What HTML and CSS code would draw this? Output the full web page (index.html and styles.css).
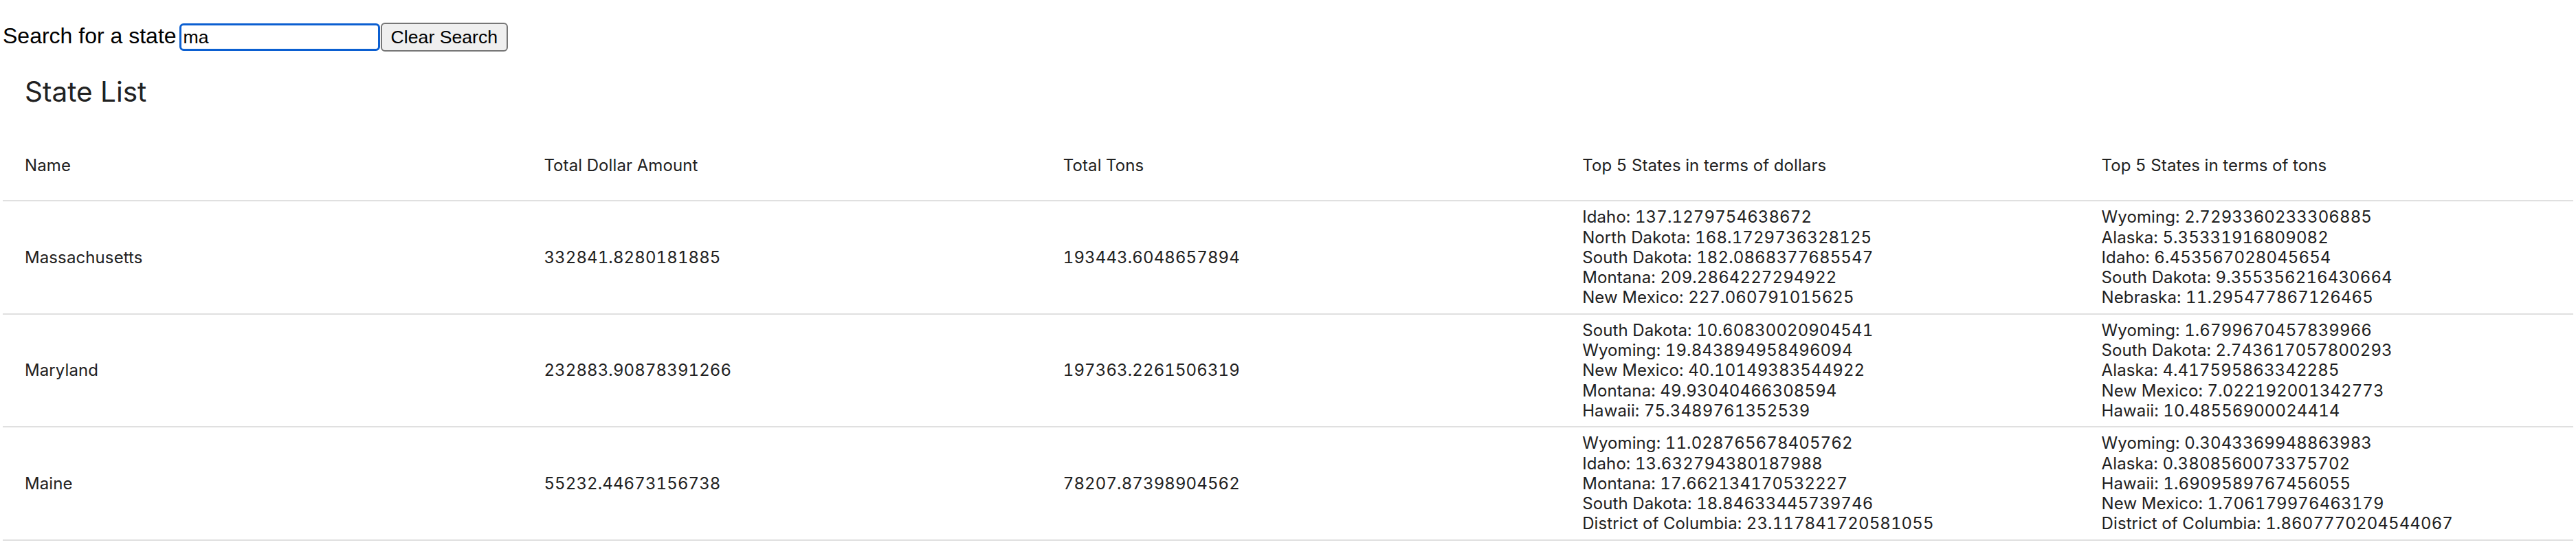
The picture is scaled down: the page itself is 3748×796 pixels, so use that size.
FILE: index.html
```html
<!DOCTYPE html>
<html lang="en">
<head>
<meta charset="utf-8">
<title>State List</title>
<link rel="stylesheet" href="styles.css">
</head>
<body>
<div class="page">
  <div class="search">
    <label class="search-label" for="q">Search for a state</label>
    <input id="q" class="search-input" type="text" value="ma">
    <button class="clear-btn" type="button">Clear Search</button>
  </div>
  <h2 class="title">State List</h2>
  <table class="states">
    <colgroup>
      <col class="col">
      <col class="col">
      <col class="col">
      <col class="col">
      <col>
    </colgroup>
    <thead>
      <tr>
        <th>Name</th>
        <th>Total Dollar Amount</th>
        <th>Total Tons</th>
        <th>Top 5 States in terms of dollars</th>
        <th>Top 5 States in terms of tons</th>
      </tr>
    </thead>
    <tbody>
      <tr>
        <td>Massachusetts</td>
        <td>332841.8280181885</td>
        <td>193443.6048657894</td>
        <td>
          <div class="line">Idaho: 137.1279754638672</div>
          <div class="line">North Dakota: 168.1729736328125</div>
          <div class="line">South Dakota: 182.0868377685547</div>
          <div class="line">Montana: 209.2864227294922</div>
          <div class="line">New Mexico: 227.060791015625</div>
        </td>
        <td>
          <div class="line">Wyoming: 2.7293360233306885</div>
          <div class="line">Alaska: 5.35331916809082</div>
          <div class="line">Idaho: 6.453567028045654</div>
          <div class="line">South Dakota: 9.355356216430664</div>
          <div class="line">Nebraska: 11.295477867126465</div>
        </td>
      </tr>
      <tr>
        <td>Maryland</td>
        <td>232883.90878391266</td>
        <td>197363.2261506319</td>
        <td>
          <div class="line">South Dakota: 10.60830020904541</div>
          <div class="line">Wyoming: 19.843894958496094</div>
          <div class="line">New Mexico: 40.10149383544922</div>
          <div class="line">Montana: 49.93040466308594</div>
          <div class="line">Hawaii: 75.3489761352539</div>
        </td>
        <td>
          <div class="line">Wyoming: 1.6799670457839966</div>
          <div class="line">South Dakota: 2.743617057800293</div>
          <div class="line">Alaska: 4.417595863342285</div>
          <div class="line">New Mexico: 7.022192001342773</div>
          <div class="line">Hawaii: 10.48556900024414</div>
        </td>
      </tr>
      <tr>
        <td>Maine</td>
        <td>55232.44673156738</td>
        <td>78207.87398904562</td>
        <td>
          <div class="line">Wyoming: 11.028765678405762</div>
          <div class="line">Idaho: 13.632794380187988</div>
          <div class="line">Montana: 17.662134170532227</div>
          <div class="line">South Dakota: 18.84633445739746</div>
          <div class="line">District of Columbia: 23.117841720581055</div>
        </td>
        <td>
          <div class="line">Wyoming: 0.3043369948863983</div>
          <div class="line">Alaska: 0.3808560073375702</div>
          <div class="line">Hawaii: 1.6909589767456055</div>
          <div class="line">New Mexico: 1.706179976463179</div>
          <div class="line">District of Columbia: 1.8607770204544067</div>
        </td>
      </tr>
    </tbody>
  </table>
</div>
</body>
</html>
```

FILE: styles.css
```css
html, body {
  margin: 0;
  padding: 0;
  background: #ffffff;
  overflow: hidden;
}

body {
  font-family: Inter, "Noto Sans", sans-serif;
  color: #000000;
}

.page {
  padding: 0 4px;
}

.search {
  display: flex;
  align-items: baseline;
  margin-top: 33px;
}

.search-label {
  font-family: "Liberation Sans", Arial, sans-serif;
  font-size: 32px;
  color: #000000;
}

.search-input {
  box-sizing: border-box;
  width: 292px;
  height: 40px;
  margin: 0 0 0 4px;
  padding: 0 3px;
  border: 3px solid #0b5fd1;
  border-radius: 6px;
  outline: none;
  font-family: "Liberation Sans", Arial, sans-serif;
  font-size: 26.67px;
  color: #000000;
  background: #ffffff;
}

.clear-btn {
  box-sizing: border-box;
  height: 42px;
  margin: 0 0 0 1px;
  padding: 0 13px;
  border: 2px solid #767676;
  border-radius: 6px;
  background: #efefef;
  font-family: "Liberation Sans", Arial, sans-serif;
  font-size: 26.67px;
  color: #000000;
}

.title {
  margin: 34px 0 0 32px;
  font-family: Inter, sans-serif;
  font-size: 40.5px;
  font-weight: 400;
  line-height: normal;
  color: #212121;
}

.states {
  width: 100%;
  margin-top: 32px;
  border-collapse: collapse;
  table-layout: fixed;
}

.col {
  width: 755.4px;
}

.states th,
.states td {
  padding: 8px 32px;
  text-align: left;
  vertical-align: middle;
  font-family: Inter, sans-serif;
  font-size: 24px;
  font-weight: 400;
  line-height: 29.3px;
  letter-spacing: 0.1px;
  font-variant-numeric: tabular-nums;
  color: #212121;
  border-bottom: 2px solid #e0e0e0;
  white-space: nowrap;
}

.states th {
  padding-top: 36px;
  padding-bottom: 36px;
}

.line {
  display: block;
}
```
